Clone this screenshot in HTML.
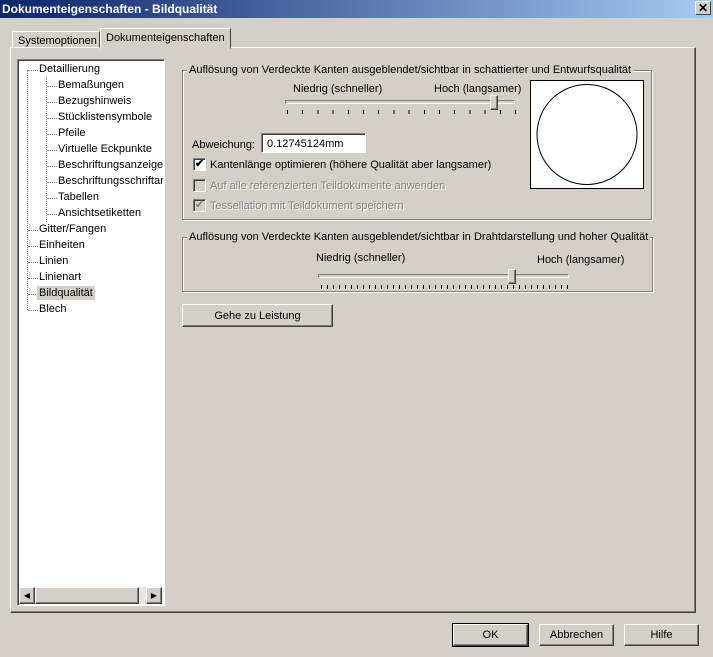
<!DOCTYPE html>
<html><head><style>
*{margin:0;padding:0;box-sizing:border-box}
body{width:713px;height:657px;background:#d4d0c8;font:11px "Liberation Sans",sans-serif;position:relative;overflow:hidden;color:#000}
.a{position:absolute}
.title{left:0;top:0;width:713px;height:18px;background:linear-gradient(90deg,#0a246a,#a6caf0);color:#fff;font-weight:bold;font-size:12px;padding:2px 0 0 2px}
.close{left:695px;top:1px;width:16px;height:14px;background:#d4d0c8;border:1px solid;border-color:#fff #404040 #404040 #fff;font-size:12px;font-weight:bold;text-align:center;line-height:12px;color:#000}
.raised{border:1px solid;border-color:#fff #404040 #404040 #fff;box-shadow:inset -1px -1px #808080}
.sunk{border:1px solid;border-color:#808080 #fff #fff #808080;box-shadow:inset 1px 1px #404040}
.grp{border:1px solid #808080;box-shadow:1px 1px #fff, inset 1px 1px #fff}
.leg{background:#d4d0c8;padding:0 2px;top:-8px;left:4px;white-space:nowrap}
.btn{background:#d4d0c8;text-align:center;line-height:20px}
.tree div{position:absolute;white-space:nowrap}
.dis{color:#808080;text-shadow:1px 1px #fff}
.cb{width:13px;height:13px;background:#fff}
</style></head><body>
<div class="a title">Dokumenteigenschaften - Bildqualität</div>
<div class="a close">✕</div>

<!-- tab panel -->
<div class="a raised" style="left:10px;top:47px;width:686px;height:566px"></div>
<div class="a" style="left:12px;top:31px;width:88px;height:17px;border:1px solid;border-color:#fff #404040 transparent #fff;padding:3px 0 0 5px">Systemoptionen</div>
<div class="a" style="left:100px;top:28px;width:131px;height:21px;background:#d4d0c8;border:1px solid;border-color:#fff #404040 transparent #fff;padding:3px 0 0 5px">Dokumenteigenschaften</div>

<!-- tree -->
<div class="a sunk" style="left:17px;top:59px;width:148px;height:547px;background:#fff"></div>
<div class="a tree" style="left:19px;top:63px;width:144px;height:522px;overflow:hidden">
<div style="left:8px;top:7px;width:1px;height:240px;border-left:1px dotted #808080"></div>
<div style="left:27px;top:14px;width:1px;height:145px;border-left:1px dotted #808080"></div>
<div style="left:9px;top:7px;width:10px;border-top:1px dotted #808080"></div>
<div style="left:20px;top:0">Detaillierung</div>
<div style="left:28px;top:23px;width:10px;border-top:1px dotted #808080"></div><div style="left:39px;top:16px">Bemaßungen</div>
<div style="left:28px;top:39px;width:10px;border-top:1px dotted #808080"></div><div style="left:39px;top:32px">Bezugshinweis</div>
<div style="left:28px;top:55px;width:10px;border-top:1px dotted #808080"></div><div style="left:39px;top:48px">Stücklistensymbole</div>
<div style="left:28px;top:71px;width:10px;border-top:1px dotted #808080"></div><div style="left:39px;top:64px">Pfeile</div>
<div style="left:28px;top:87px;width:10px;border-top:1px dotted #808080"></div><div style="left:39px;top:80px">Virtuelle Eckpunkte</div>
<div style="left:28px;top:103px;width:10px;border-top:1px dotted #808080"></div><div style="left:39px;top:96px">Beschriftungsanzeige</div>
<div style="left:28px;top:119px;width:10px;border-top:1px dotted #808080"></div><div style="left:39px;top:112px">Beschriftungsschriftart</div>
<div style="left:28px;top:135px;width:10px;border-top:1px dotted #808080"></div><div style="left:39px;top:128px">Tabellen</div>
<div style="left:28px;top:151px;width:10px;border-top:1px dotted #808080"></div><div style="left:39px;top:144px">Ansichtsetiketten</div>
<div style="left:9px;top:167px;width:10px;border-top:1px dotted #808080"></div><div style="left:20px;top:160px">Gitter/Fangen</div>
<div style="left:9px;top:183px;width:10px;border-top:1px dotted #808080"></div><div style="left:20px;top:176px">Einheiten</div>
<div style="left:9px;top:199px;width:10px;border-top:1px dotted #808080"></div><div style="left:20px;top:192px">Linien</div>
<div style="left:9px;top:215px;width:10px;border-top:1px dotted #808080"></div><div style="left:20px;top:208px">Linienart</div>
<div style="left:9px;top:231px;width:10px;border-top:1px dotted #808080"></div><div style="left:18px;top:223px;background:#d4d0c8;padding:1px 2px">Bildqualität</div>
<div style="left:9px;top:247px;width:10px;border-top:1px dotted #808080"></div><div style="left:20px;top:240px">Blech</div>
</div>
<!-- hscroll -->
<div class="a" style="left:19px;top:587px;width:144px;height:17px;background:#e8e6e2"></div>
<div class="a raised btn" style="left:19px;top:587px;width:16px;height:17px;font-size:8px;line-height:15px">◀</div>
<div class="a raised" style="left:35px;top:587px;width:104px;height:17px;background:#d4d0c8"></div>
<div class="a raised btn" style="left:146px;top:587px;width:16px;height:17px;font-size:8px;line-height:15px">▶</div>

<!-- group 1 -->
<div class="a grp" style="left:182px;top:70px;width:470px;height:150px">
 <div class="a leg" style="top:-7px">Auflösung von Verdeckte Kanten ausgeblendet/sichtbar in schattierter und Entwurfsqualität</div>
</div>
<div class="a" style="left:293px;top:83px">Niedrig (schneller)</div>
<div class="a" style="left:434px;top:83px">Hoch (langsamer)</div>
<div class="a" style="left:285px;top:100px;width:230px;height:4px;border:1px solid;border-color:#808080 #fff #fff #808080;background:#d4d0c8"></div>
<div class="a raised" style="left:490px;top:95px;width:8px;height:15px;background:#d4d0c8"></div>
<div class="a" style="left:287px;top:110px;width:230px;height:4px;background:repeating-linear-gradient(90deg,#000 0 1px,transparent 1px 15.2px)"></div>
<div class="a" style="left:530px;top:80px;width:114px;height:109px;background:#fff;border:1px solid #000">
<svg width="112" height="107"><circle cx="56" cy="53.5" r="50" fill="none" stroke="#000" stroke-width="1"/></svg></div>
<div class="a" style="left:192px;top:139px">Abweichung:</div>
<div class="a sunk" style="left:261px;top:133px;width:105px;height:20px;background:#fff;padding:4px 0 0 5px">0.12745124mm</div>
<div class="a sunk cb" style="left:193px;top:158px;font-size:11px;line-height:10px;text-align:center;font-weight:bold">✔</div>
<div class="a" style="left:210px;top:159px">Kantenlänge optimieren (höhere Qualität aber langsamer)</div>
<div class="a sunk cb" style="left:193px;top:179px;background:#d4d0c8"></div>
<div class="a dis" style="left:210px;top:180px">Auf alle referenzierten Teildokumente anwenden</div>
<div class="a sunk cb dis" style="left:193px;top:199px;background:#d4d0c8;font-size:11px;line-height:10px;text-align:center;text-shadow:none">✔</div>
<div class="a dis" style="left:210px;top:200px">Tessellation mit Teildokument speichern</div>

<!-- group 2 -->
<div class="a grp" style="left:182px;top:237px;width:471px;height:55px">
 <div class="a leg" style="top:-7px">Auflösung von Verdeckte Kanten ausgeblendet/sichtbar in Drahtdarstellung und hoher Qualität</div>
</div>
<div class="a" style="left:316px;top:252px">Niedrig (schneller)</div>
<div class="a" style="left:537px;top:254px">Hoch (langsamer)</div>
<div class="a" style="left:318px;top:274px;width:251px;height:4px;border:1px solid;border-color:#808080 #fff #fff #808080"></div>
<div class="a raised" style="left:508px;top:269px;width:8px;height:15px;background:#d4d0c8"></div>
<div class="a" style="left:321px;top:285px;width:247px;height:4px;background:repeating-linear-gradient(90deg,#000 0 1px,transparent 1px 6px)"></div>

<div class="a raised btn" style="left:182px;top:304px;width:151px;height:23px;line-height:22px">Gehe zu Leistung</div>

<div class="a raised btn" style="left:453px;top:624px;width:75px;height:22px;outline:1px solid #000">OK</div>
<div class="a raised btn" style="left:539px;top:624px;width:75px;height:22px">Abbrechen</div>
<div class="a raised btn" style="left:624px;top:624px;width:75px;height:22px">Hilfe</div>
</body></html>
